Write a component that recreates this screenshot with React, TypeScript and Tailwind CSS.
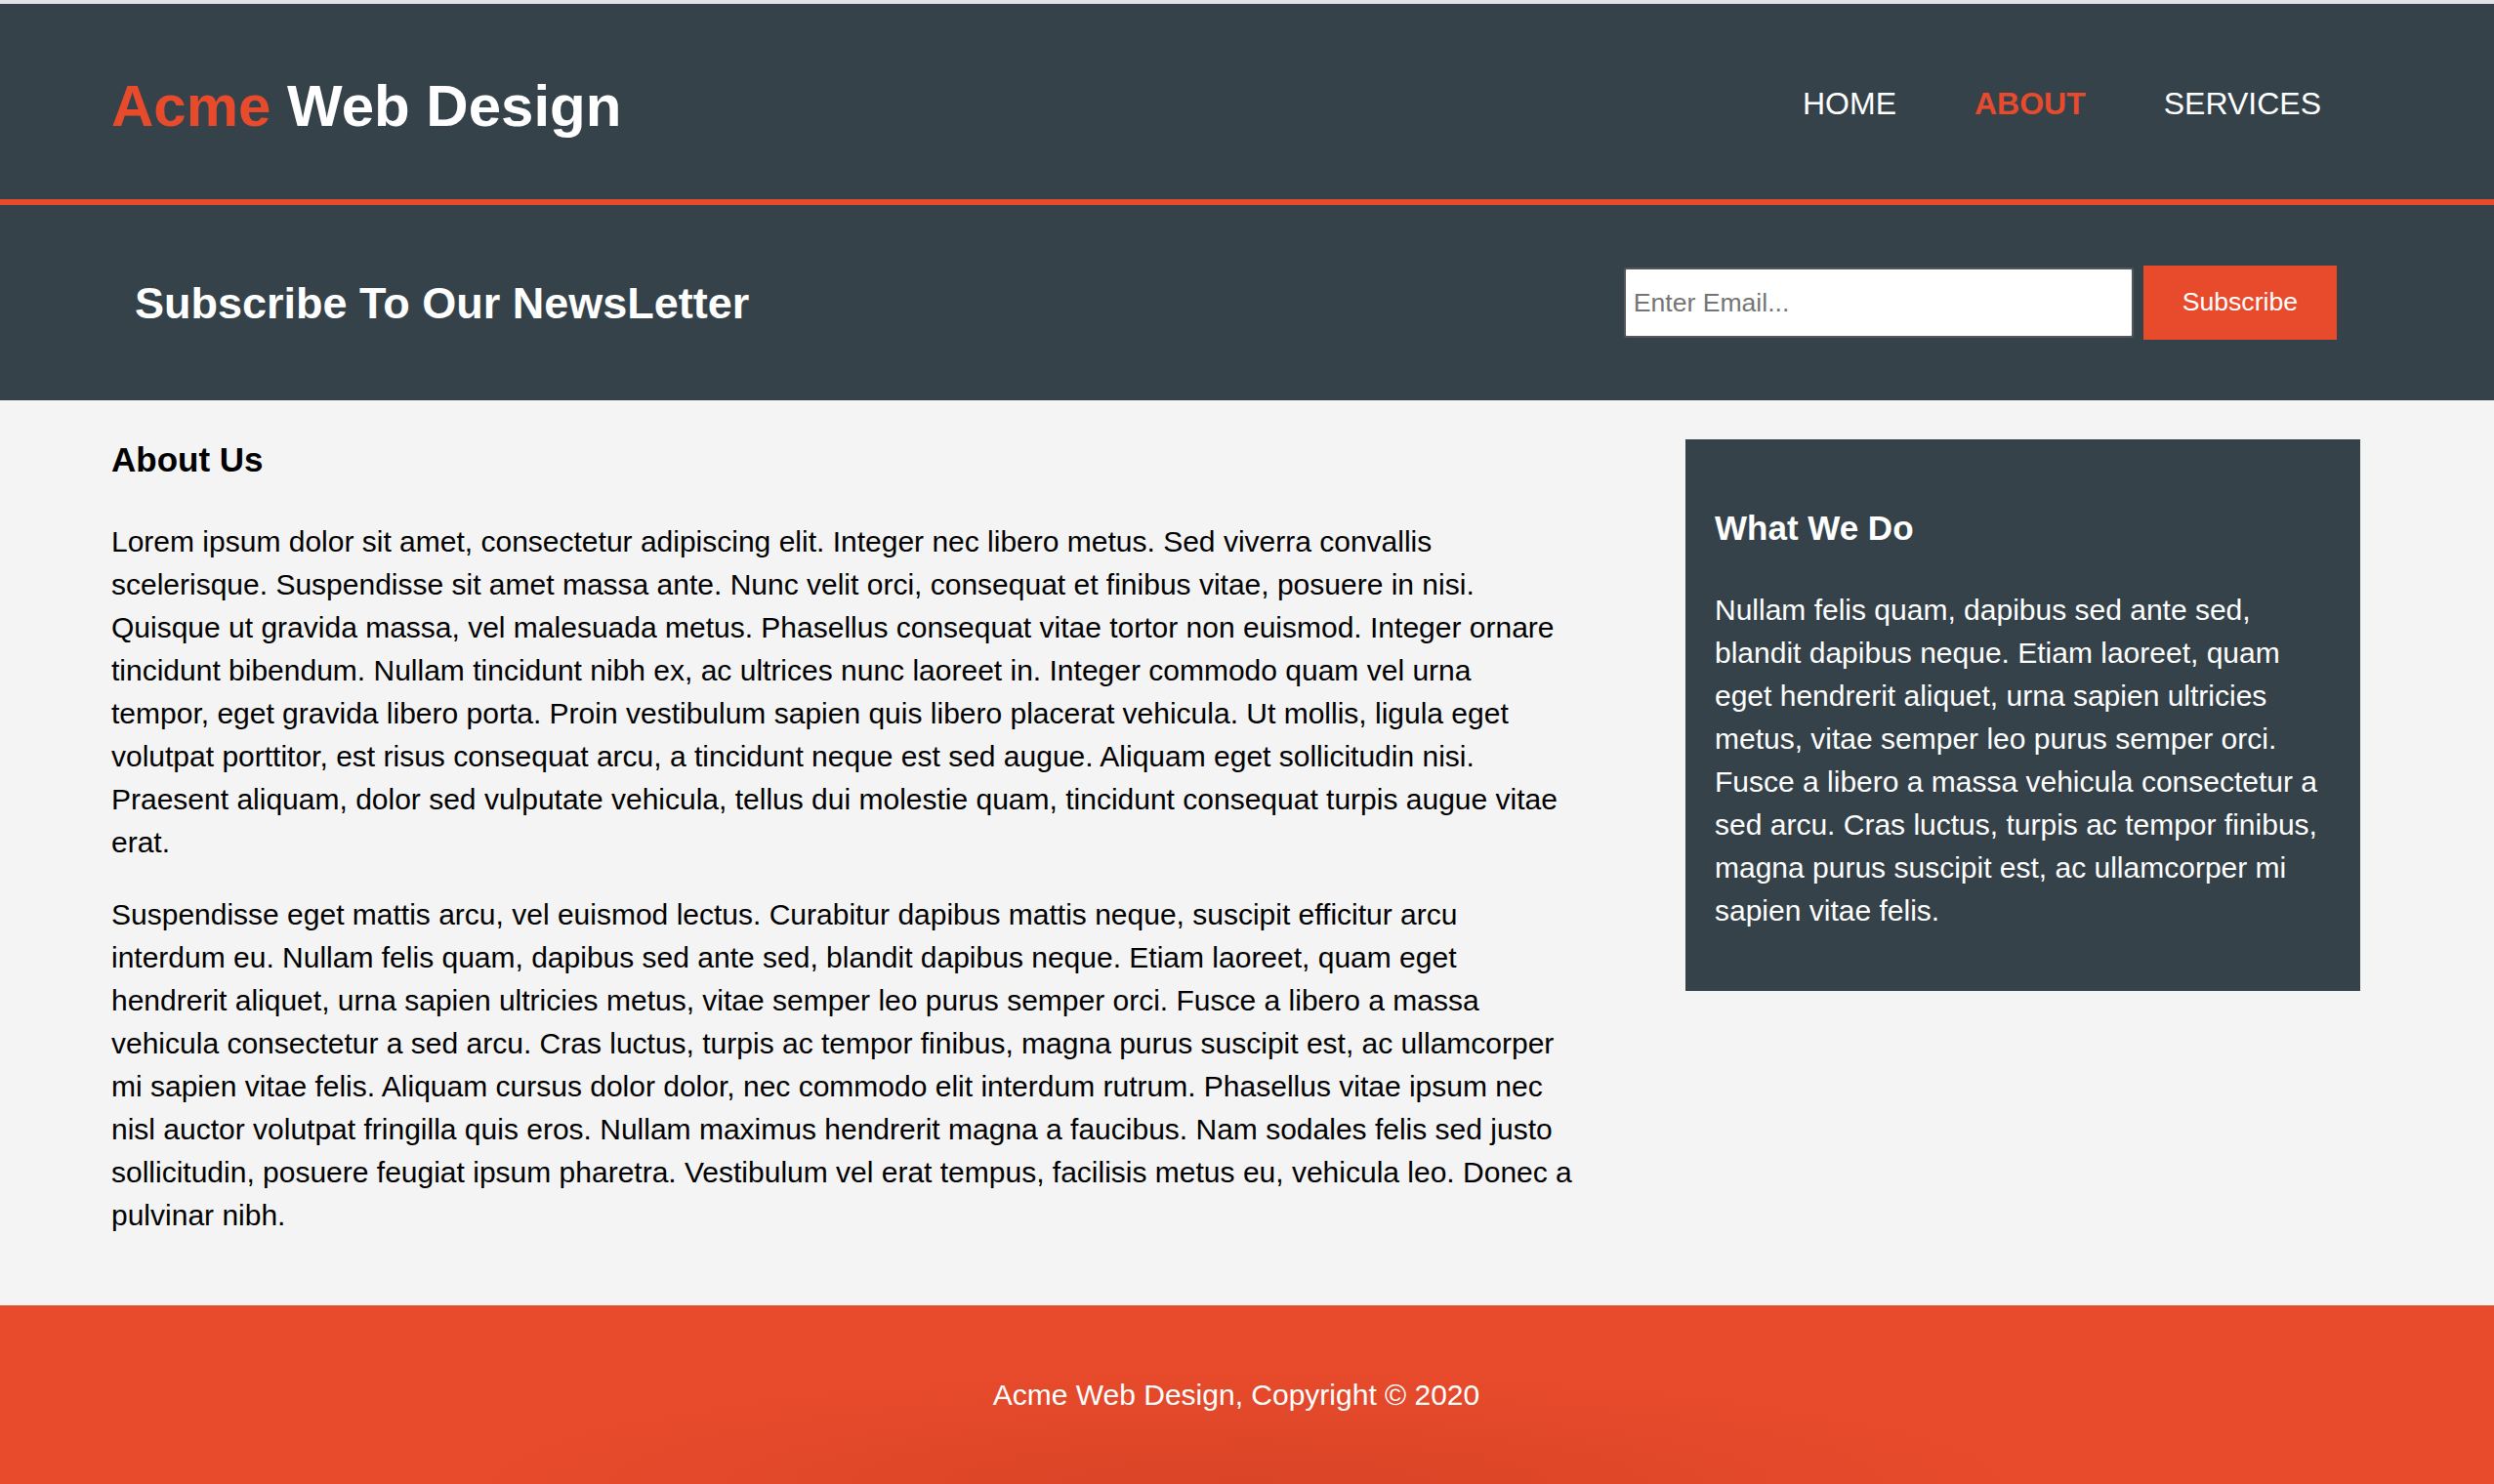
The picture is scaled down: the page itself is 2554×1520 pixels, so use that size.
import React from 'react';

const NAV = [
  { label: 'Home', active: false },
  { label: 'About', active: true },
  { label: 'Services', active: false },
];

const App: React.FC = () => {
  return (
    <div className="min-h-screen bg-[#f4f4f4] font-['Liberation_Sans',Arial,sans-serif] text-black">
      <div className="h-[4px] bg-[#e1e3e6]" />

      {/* header */}
      <header className="h-[206px] bg-[#35424a] border-b-[6px] border-[#e84b2c] text-white">
        <div className="ml-[114px] w-[2303px] pt-[75px] flex items-start justify-between">
          <h1 className="text-[60px] leading-none font-bold">
            <span className="text-[#e84b2c]">Acme</span> Web Design
          </h1>
          <nav className="mt-[11px]">
            <ul className="flex">
              {NAV.map((item) => (
                <li key={item.label} className="px-[40px]">
                  <a
                    href="#"
                    className={
                      item.active
                        ? 'text-[32px] leading-none uppercase font-bold text-[#e84b2c]'
                        : 'text-[32px] leading-none uppercase text-white'
                    }
                  >
                    {item.label}
                  </a>
                </li>
              ))}
            </ul>
          </nav>
        </div>
      </header>

      {/* newsletter */}
      <section className="h-[200px] bg-[#35424a] text-white">
        <div className="ml-[114px] w-[2303px] h-full px-[24px] flex items-center justify-between">
          <h2 className="text-[45px] leading-none font-bold">Subscribe To Our NewsLetter</h2>
          <form className="flex items-center gap-[10px]" onSubmit={(e) => e.preventDefault()}>
            <input
              type="email"
              placeholder="Enter Email..."
              className="w-[522px] h-[72px] bg-white border-2 border-[#54585c] rounded-[3px] px-[8px] text-[26.6px] text-black placeholder:text-[#757575] outline-none"
            />
            <button className="h-[76px] px-[40px] bg-[#e84b2c] text-white text-[26.6px]">Subscribe</button>
          </form>
        </div>
      </section>

      {/* main */}
      <div className="ml-[114px] w-[2303px] flex justify-between">
        <article className="w-[1497px]">
          <h1 className="mt-[35px] mb-[35px] text-[35px] leading-[52.5px] font-bold">About Us</h1>
          <p className="mb-[30px] text-[30px] leading-[44px]">
            Lorem ipsum dolor sit amet, consectetur adipiscing elit. Integer nec libero metus. Sed viverra convallis
            scelerisque. Suspendisse sit amet massa ante. Nunc velit orci, consequat et finibus vitae, posuere in nisi.
            Quisque ut gravida massa, vel malesuada metus. Phasellus consequat vitae tortor non euismod. Integer ornare
            tincidunt bibendum. Nullam tincidunt nibh ex, ac ultrices nunc laoreet in. Integer commodo quam vel urna
            tempor, eget gravida libero porta. Proin vestibulum sapien quis libero placerat vehicula. Ut mollis, ligula eget
            volutpat porttitor, est risus consequat arcu, a tincidunt neque est sed augue. Aliquam eget sollicitudin nisi.
            Praesent aliquam, dolor sed vulputate vehicula, tellus dui molestie quam, tincidunt consequat turpis augue vitae
            erat.
          </p>
          <p className="mb-[30px] text-[30px] leading-[44px]">
            Suspendisse eget mattis arcu, vel euismod lectus. Curabitur dapibus mattis neque, suscipit efficitur arcu
            interdum eu. Nullam felis quam, dapibus sed ante sed, blandit dapibus neque. Etiam laoreet, quam eget
            hendrerit aliquet, urna sapien ultricies metus, vitae semper leo purus semper orci. Fusce a libero a massa
            vehicula consectetur a sed arcu. Cras luctus, turpis ac tempor finibus, magna purus suscipit est, ac ullamcorper
            mi sapien vitae felis. Aliquam cursus dolor dolor, nec commodo elit interdum rutrum. Phasellus vitae ipsum nec
            nisl auctor volutpat fringilla quis eros. Nullam maximus hendrerit magna a faucibus. Nam sodales felis sed justo
            sollicitudin, posuere feugiat ipsum pharetra. Vestibulum vel erat tempus, facilisis metus eu, vehicula leo. Donec a
            pulvinar nibh.
          </p>
        </article>

        <aside className="w-[691px] pt-[20px]">
          <div className="mt-[20px] p-[30px] bg-[#35424a] text-white">
            <h3 className="mt-[35px] mb-[35px] text-[35px] leading-[52.5px] font-bold">What We Do</h3>
            <p className="mb-[30px] text-[30px] leading-[44px]">
              Nullam felis quam, dapibus sed ante sed, blandit dapibus neque. Etiam laoreet, quam eget hendrerit aliquet,
              urna sapien ultricies metus, vitae semper leo purus semper orci. Fusce a libero a massa vehicula consectetur
              a sed arcu. Cras luctus, turpis ac tempor finibus, magna purus suscipit est, ac ullamcorper mi sapien vitae
              felis.
            </p>
          </div>
        </aside>
      </div>

      {/* footer */}
      <footer className="mt-[40px] pt-[40px] pb-[40px] pl-[40px] pr-[62px] bg-[#e84b2c] bg-[radial-gradient(ellipse_900px_130px_at_50%_100%,rgba(170,45,20,0.22),transparent)] text-white text-center">
        <p className="my-[30px] text-[30px] leading-[44px]">Acme Web Design, Copyright &copy; 2020</p>
      </footer>
    </div>
  );
};

export default App;
